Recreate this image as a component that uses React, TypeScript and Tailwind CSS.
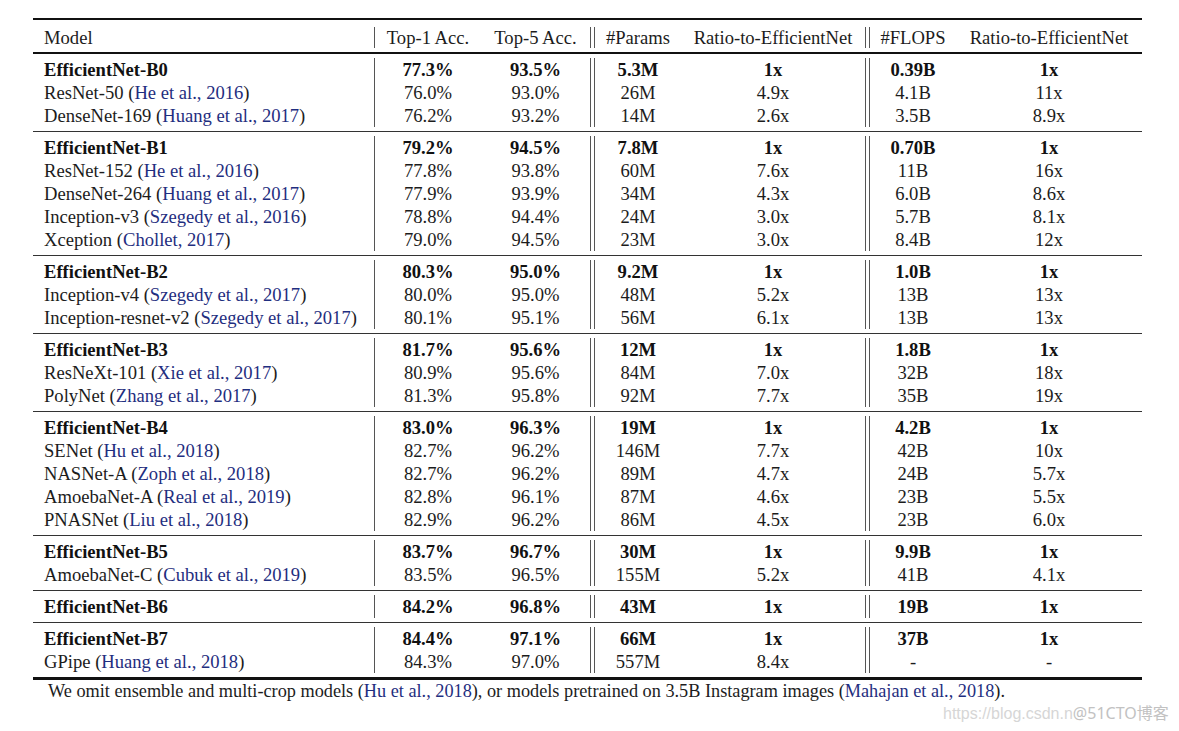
import React from "react";

type Row = {
  model: string;
  cite?: string;
  top1: string;
  top5: string;
  params: string;
  ratioP: string;
  flops: string;
  ratioF: string;
};

const groups: Row[][] = [
  [
    { model: "EfficientNet-B0", top1: "77.3%", top5: "93.5%", params: "5.3M", ratioP: "1x", flops: "0.39B", ratioF: "1x" },
    { model: "ResNet-50", cite: "He et al., 2016", top1: "76.0%", top5: "93.0%", params: "26M", ratioP: "4.9x", flops: "4.1B", ratioF: "11x" },
    { model: "DenseNet-169", cite: "Huang et al., 2017", top1: "76.2%", top5: "93.2%", params: "14M", ratioP: "2.6x", flops: "3.5B", ratioF: "8.9x" },
  ],
  [
    { model: "EfficientNet-B1", top1: "79.2%", top5: "94.5%", params: "7.8M", ratioP: "1x", flops: "0.70B", ratioF: "1x" },
    { model: "ResNet-152", cite: "He et al., 2016", top1: "77.8%", top5: "93.8%", params: "60M", ratioP: "7.6x", flops: "11B", ratioF: "16x" },
    { model: "DenseNet-264", cite: "Huang et al., 2017", top1: "77.9%", top5: "93.9%", params: "34M", ratioP: "4.3x", flops: "6.0B", ratioF: "8.6x" },
    { model: "Inception-v3", cite: "Szegedy et al., 2016", top1: "78.8%", top5: "94.4%", params: "24M", ratioP: "3.0x", flops: "5.7B", ratioF: "8.1x" },
    { model: "Xception", cite: "Chollet, 2017", top1: "79.0%", top5: "94.5%", params: "23M", ratioP: "3.0x", flops: "8.4B", ratioF: "12x" },
  ],
  [
    { model: "EfficientNet-B2", top1: "80.3%", top5: "95.0%", params: "9.2M", ratioP: "1x", flops: "1.0B", ratioF: "1x" },
    { model: "Inception-v4", cite: "Szegedy et al., 2017", top1: "80.0%", top5: "95.0%", params: "48M", ratioP: "5.2x", flops: "13B", ratioF: "13x" },
    { model: "Inception-resnet-v2", cite: "Szegedy et al., 2017", top1: "80.1%", top5: "95.1%", params: "56M", ratioP: "6.1x", flops: "13B", ratioF: "13x" },
  ],
  [
    { model: "EfficientNet-B3", top1: "81.7%", top5: "95.6%", params: "12M", ratioP: "1x", flops: "1.8B", ratioF: "1x" },
    { model: "ResNeXt-101", cite: "Xie et al., 2017", top1: "80.9%", top5: "95.6%", params: "84M", ratioP: "7.0x", flops: "32B", ratioF: "18x" },
    { model: "PolyNet", cite: "Zhang et al., 2017", top1: "81.3%", top5: "95.8%", params: "92M", ratioP: "7.7x", flops: "35B", ratioF: "19x" },
  ],
  [
    { model: "EfficientNet-B4", top1: "83.0%", top5: "96.3%", params: "19M", ratioP: "1x", flops: "4.2B", ratioF: "1x" },
    { model: "SENet", cite: "Hu et al., 2018", top1: "82.7%", top5: "96.2%", params: "146M", ratioP: "7.7x", flops: "42B", ratioF: "10x" },
    { model: "NASNet-A", cite: "Zoph et al., 2018", top1: "82.7%", top5: "96.2%", params: "89M", ratioP: "4.7x", flops: "24B", ratioF: "5.7x" },
    { model: "AmoebaNet-A", cite: "Real et al., 2019", top1: "82.8%", top5: "96.1%", params: "87M", ratioP: "4.6x", flops: "23B", ratioF: "5.5x" },
    { model: "PNASNet", cite: "Liu et al., 2018", top1: "82.9%", top5: "96.2%", params: "86M", ratioP: "4.5x", flops: "23B", ratioF: "6.0x" },
  ],
  [
    { model: "EfficientNet-B5", top1: "83.7%", top5: "96.7%", params: "30M", ratioP: "1x", flops: "9.9B", ratioF: "1x" },
    { model: "AmoebaNet-C", cite: "Cubuk et al., 2019", top1: "83.5%", top5: "96.5%", params: "155M", ratioP: "5.2x", flops: "41B", ratioF: "4.1x" },
  ],
  [
    { model: "EfficientNet-B6", top1: "84.2%", top5: "96.8%", params: "43M", ratioP: "1x", flops: "19B", ratioF: "1x" },
  ],
  [
    { model: "EfficientNet-B7", top1: "84.4%", top5: "97.1%", params: "66M", ratioP: "1x", flops: "37B", ratioF: "1x" },
    { model: "GPipe", cite: "Huang et al., 2018", top1: "84.3%", top5: "97.0%", params: "557M", ratioP: "8.4x", flops: "-", ratioF: "-" },
  ],
];

const cols = "grid grid-cols-[342px_106px_109px_5px_86px_184px_5px_86px_186px]";

function Cite({ children }: { children: React.ReactNode }) {
  return <span className="text-[#1f2e80]">{children}</span>;
}

function TableRow({ row }: { row: Row }) {
  // first row of each block is the EfficientNet one, printed bold
  const bold = !row.cite;
  const cell = "text-center " + (bold ? "font-bold text-[#111]" : "");
  return (
    <div className={cols + " h-[23px] leading-[23px]"}>
      <div className={"pl-[11px] border-r border-[#555] whitespace-nowrap " + (bold ? "font-bold text-[#111]" : "")}>
        {row.model}
        {row.cite && (
          <>
            {" ("}
            <Cite>{row.cite}</Cite>
            {")"}
          </>
        )}
      </div>
      <div className={cell}>{row.top1}</div>
      <div className={cell}>{row.top5}</div>
      <div className="border-x border-[#555]" />
      <div className={cell}>{row.params}</div>
      <div className={cell}>{row.ratioP}</div>
      <div className="border-x border-[#555]" />
      <div className={cell}>{row.flops}</div>
      <div className={cell}>{row.ratioF}</div>
    </div>
  );
}

export default function App() {
  return (
    <div className="relative w-[1179px] h-[731px] overflow-hidden bg-white pt-[18px] font-['Liberation_Serif','Times_New_Roman',serif] text-[18.6px] text-[#1c1c1c]">
      <div className="ml-[33px] w-[1109px]">
        <div className="border-t-2 border-b-2 border-[#111] pt-[7px] pb-[4px]">
          <div className={cols + " h-[21px] leading-[21px]"}>
            <div className="pl-[11px] border-r border-[#555]">Model</div>
            <div className="text-center">Top-1 Acc.</div>
            <div className="text-center">Top-5 Acc.</div>
            <div className="border-x border-[#555]" />
            <div className="text-center">#Params</div>
            <div className="text-center whitespace-nowrap">Ratio-to-EfficientNet</div>
            <div className="border-x border-[#555]" />
            <div className="text-center">#FLOPS</div>
            <div className="text-center whitespace-nowrap">Ratio-to-EfficientNet</div>
          </div>
        </div>
        {groups.map((g, i) => (
          <div
            key={i}
            className={
              "py-[4px] " +
              (i === groups.length - 1 ? "border-b-[3px] border-[#111]" : "border-b border-[#333]")
            }
          >
            {g.map((r) => (
              <TableRow key={r.model} row={r} />
            ))}
          </div>
        ))}
        <p className="pl-[15px] text-[18.25px] leading-[23px] whitespace-nowrap">
          We omit ensemble and multi-crop models (<Cite>Hu et al., 2018</Cite>), or models pretrained on 3.5B Instagram
          images (<Cite>Mahajan et al., 2018</Cite>).
        </p>
      </div>
      <div className="absolute left-[943px] top-[702px] font-['Liberation_Sans',Arial,sans-serif] text-[16px] leading-[22px] whitespace-nowrap">
        <span className="text-[#d6d6d6]">https://blog.csdn.n</span>
        <span className="text-[#c2c2c2] font-['Noto_Sans','Noto_Sans_CJK_SC',sans-serif]">@51CTO博客</span>
      </div>
    </div>
  );
}
